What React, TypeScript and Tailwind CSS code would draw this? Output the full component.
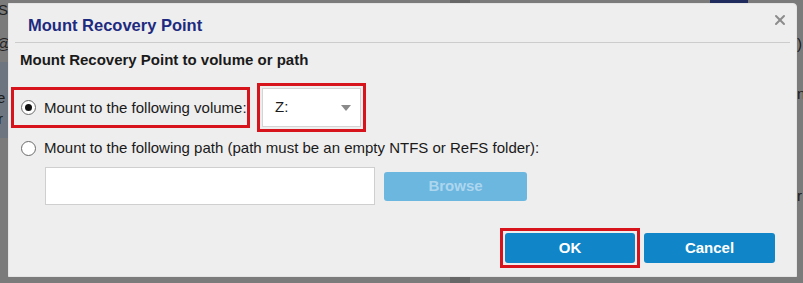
import { X } from "lucide-react"

function Radio({ checked }: { checked?: boolean }) {
  return (
    <span className="w-[15px] h-[15px] rounded-full border border-[#6b6b6b] bg-white flex items-center justify-center shrink-0">
      {checked && <span className="w-[7px] h-[7px] rounded-full bg-[#111]" />}
    </span>
  )
}

export default function App() {
  return (
    <div
      className="relative w-[803px] h-[283px] bg-[#7b7b7b] overflow-hidden pt-[3px] pl-[8px]"
      style={{ fontFamily: '"Liberation Sans", Arial, sans-serif' }}
    >
      {/* page behind the modal */}
      <span className="absolute left-[-2px] top-[2px] text-[15px] leading-none text-[#222]">S</span>
      <span className="absolute left-[-4px] top-[36px] text-[15px] leading-none text-[#222]">@</span>
      <div className="absolute left-0 top-[62px] w-[8px] h-[76px] bg-[#6c7580]" />
      <span className="absolute left-[-3px] top-[90px] text-[15px] leading-none text-[#1c1c1c]">e</span>
      <span className="absolute left-[-2px] top-[111px] text-[15px] leading-none text-[#1c1c1c]">r</span>
      <div className="absolute left-[450px] top-0 w-[20px] h-[3px] bg-[#666]" />
      <div className="absolute left-[710px] top-0 w-[38px] h-[3px] bg-[#1e2b5c]" />
      <span className="absolute left-[797px] top-[36px] text-[15px] leading-none text-[#1c1c1c]">)</span>
      <span className="absolute left-[797px] top-[86px] text-[15px] leading-none text-[#1c1c1c]">n</span>
      <span className="absolute left-[797px] top-[188px] text-[15px] leading-none text-[#1c1c1c]">r</span>
      <div className="absolute left-[450px] bottom-0 w-[20px] h-[6px] bg-[#666]" />

      <div className="relative w-[789px] h-[274px] bg-[#eeeeee] border border-[#e4e4e4] rounded-tr-[4px] flex flex-col text-[#1a1a1a]">
        <div className="h-[38px] pt-[4px] pl-[19px] flex items-center">
          <h2 className="text-[16.5px] font-bold text-[#1d2a80] leading-none">Mount Recovery Point</h2>
        </div>
        <button className="absolute right-[8px] top-[8px] text-[#8c8c8c]">
          <X className="w-[16px] h-[16px]" strokeWidth={3} />
        </button>
        <div className="mx-[6px] h-px bg-[#cccccc]" />

        <p className="mt-[8px] pl-[11px] text-[15px] font-bold leading-[18px]">Mount Recovery Point to volume or path</p>

        <div className="mt-[14px] pl-[2px] flex items-center gap-[7px]">
          <div className="w-[239px] h-[41px] border-[3px] border-[#d7141c] flex items-center pl-[7px] gap-[8px] overflow-visible">
            <Radio checked />
            <span className="text-[15px] leading-[18px] whitespace-nowrap">Mount to the following volume:</span>
          </div>
          <div className="h-[49px] border-[3px] border-[#d7141c] p-[2px]">
            <div className="w-[99px] h-[39px] bg-white border border-[#d4d4d4] flex items-center justify-between pl-[12px] pr-[9px]">
              <span className="text-[15px]">Z:</span>
              <svg width="10" height="6" viewBox="0 0 10 6">
                <path d="M0 0h10L5 6z" fill="#8a8a8a" />
              </svg>
            </div>
          </div>
        </div>

        <div className="mt-[7px] pl-[12px] flex items-center gap-[8px]">
          <Radio />
          <span className="text-[15px] leading-[18px] whitespace-nowrap">
            Mount to the following path (path must be an empty NTFS or ReFS folder):
          </span>
        </div>

        <div className="mt-[10px] ml-[36px] flex items-center gap-[9px]">
          <div className="w-[330px] h-[38px] bg-white border border-[#cfcfcf]" />
          <button className="w-[143px] h-[29px] rounded-[3px] bg-[#6cb7e0] text-[#acd6ee] text-[15px] font-bold">
            Browse
          </button>
        </div>

        <div className="mt-auto pb-[8px] pr-[21px] flex justify-end items-center gap-[4px]">
          <div className="border-[3px] border-[#d7141c] p-[2px]">
            <button className="w-[130px] h-[30px] rounded-[3px] bg-[#1085c7] text-white text-[15px] font-bold">OK</button>
          </div>
          <button className="w-[131px] h-[30px] rounded-[3px] bg-[#1085c7] text-white text-[15px] font-bold">Cancel</button>
        </div>
      </div>
    </div>
  )
}
